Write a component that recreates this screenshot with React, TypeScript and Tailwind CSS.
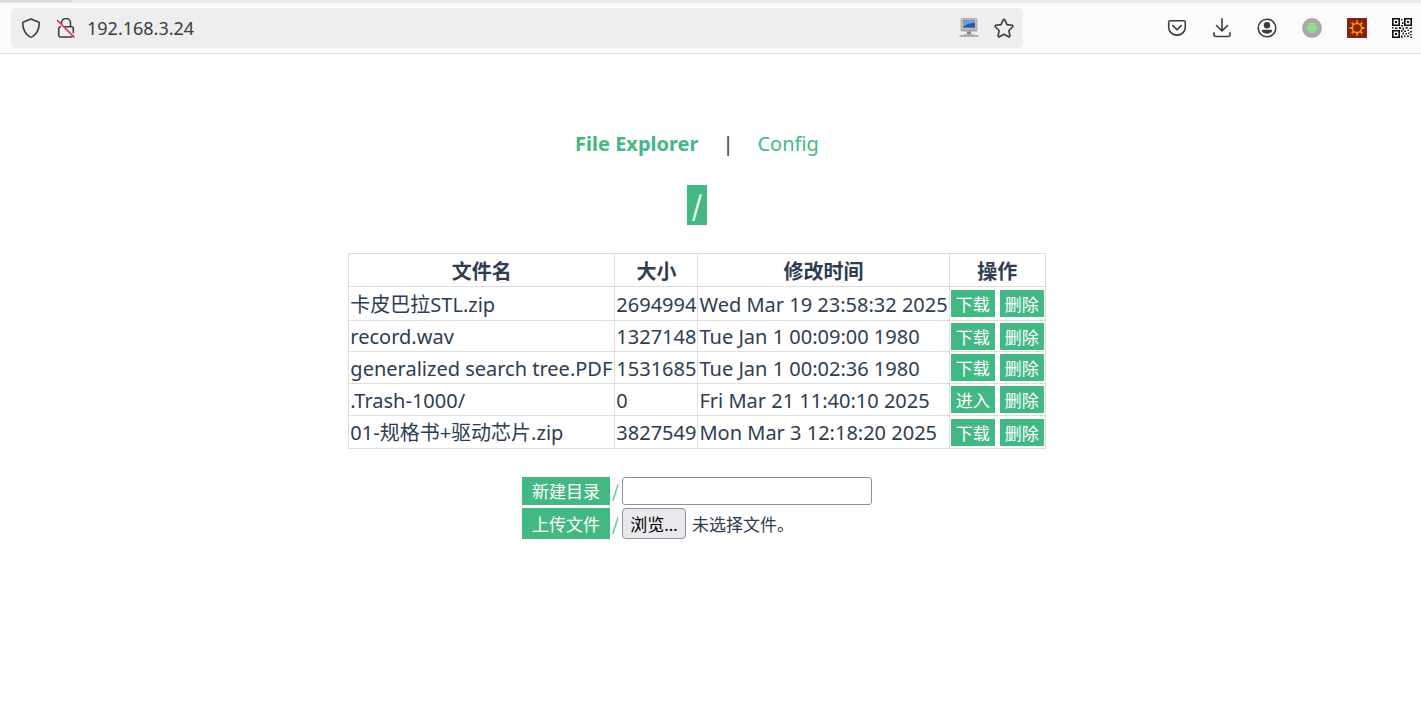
import { useState } from 'react';
import type { ReactNode } from 'react';

type Entry = { name: string; size: number; modified: string; folder?: boolean; height: string };

const entries: Entry[] = [
  { name: '卡皮巴拉STL.zip', size: 2694994, modified: 'Wed Mar 19 23:58:32 2025', height: 'h-[34px]' },
  { name: 'record.wav', size: 1327148, modified: 'Tue Jan 1 00:09:00 1980', height: 'h-[31px]' },
  { name: 'generalized search tree.PDF', size: 1531685, modified: 'Tue Jan 1 00:02:36 1980', height: 'h-[32px]' },
  { name: '.Trash-1000/', size: 0, modified: 'Fri Mar 21 11:40:10 2025', folder: true, height: 'h-[32px]' },
  { name: '01-规格书+驱动芯片.zip', size: 3827549, modified: 'Mon Mar 3 12:18:20 2025', height: 'h-[33px]' },
];

function IconButton({ label, children }: { label: string; children: ReactNode }) {
  return (
    <button type="button" aria-label={label} className="flex size-5 shrink-0 items-center justify-center">
      {children}
    </button>
  );
}

const line = { fill: 'none', stroke: '#3c3c42', strokeWidth: 1.6, strokeLinecap: 'round', strokeLinejoin: 'round' } as const;

function ShieldIcon() {
  return (
    <svg viewBox="0 0 20 20" className="size-5" {...line}>
      <path d="M10 .9 17.500 3.900c.5.2.8.5.8 1-.1 6-2.600 11-7.300 14a2 2 0 0 1-2 0C4.300 15.900 1.800 10.900 1.700 4.900c0-.5.3-.8.8-1z" />
    </svg>
  );
}

function InsecureIcon() {
  return (
    <svg viewBox="0 0 20 20" className="size-5" {...line}>
      <path d="M5.500 5a4.500 4.500 0 0 1 9 0v3.800M9 8.800h6.500a1.800 1.800 0 0 1 1.800 1.800v4M4.500 8.800A1.800 1.800 0 0 0 2.700 10.600v6.600A1.800 1.800 0 0 0 4.500 19h11.500" />
      <path d="M1.500 2.500 18 19" stroke="#e22850" />
    </svg>
  );
}

function ComputerIcon() {
  return (
    <svg viewBox="0 0 20 20" className="size-5">
      <path d="M3 .5h14a1 1 0 0 1 1 1V12H2V1.500a1 1 0 0 1 1-1z" fill="#c3bfba" stroke="#99958f" strokeWidth=".6" />
      <path d="M4 2.200h12v7.500H4z" fill="#245aa5" />
      <path d="M4 2.200h12v2.500Q8 5 4 9z" fill="#6da1dc" />
      <path d="M2 12h16v1.500H2z" fill="#aaa69f" />
      <path d="M8 13.500h4v3H8z" fill="#8b8781" />
      <path d="M5.500 16h9l1 1.500h-11z" fill="#b8b4ad" />
      <path d="M.5 18h19" stroke="#96928d" strokeWidth="1.300" />
    </svg>
  );
}

function StarIcon() {
  return (
    <svg viewBox="0 0 20 20" className="size-5" {...line}>
      <path d="M9.200 1.800a.9.9 0 0 1 1.600 0l2.200 4.800 5.200.7a.9.9 0 0 1 .5 1.500l-3.800 3.700 1 5.400a.9.900 0 0 1-1.300.9L10 16.200l-4.600 2.600a.9.900 0 0 1-1.300-.9l1-5.400-3.800-3.700a.9.900 0 0 1 .5-1.500l5.200-.7z" />
    </svg>
  );
}

function PocketIcon() {
  return (
    <svg viewBox="0 0 20 20" className="size-5" {...line}>
      <path d="M3 2.800h14A1.500 1.500 0 0 1 18.300 4.300v5a8.300 7.800 0 0 1-16.600 0v-5A1.500 1.500 0 0 1 3 2.800z" />
      <path d="m5.800 7.600 4.200 4.200 4.200-4.200" />
    </svg>
  );
}

function DownloadIcon() {
  return (
    <svg viewBox="0 0 20 20" className="size-5" {...line}>
      <path d="M10 .8v12M4.500 7.500l5.500 5.500 5.500-5.500M2 14.800v1.700a2 2 0 0 0 2 2h12a2 2 0 0 0 2-2v-1.700" />
    </svg>
  );
}

function AccountIcon() {
  return (
    <svg viewBox="0 0 20 20" className="size-5">
      <circle cx="10" cy="10" r="8.800" fill="none" stroke="#3c3c42" strokeWidth="1.600" />
      <circle cx="10" cy="7.200" r="3.200" fill="#3c3c42" />
      <path d="M5.800 11.700h8.400c.8 0 1.200.6.9 1.200-.9 1.700-2.700 2.800-5.100 2.800s-4.200-1.100-5.100-2.800c-.3-.6.1-1.200.9-1.200z" fill="#3c3c42" />
    </svg>
  );
}

function StatusIcon() {
  return (
    <svg viewBox="0 0 20 20" className="size-5">
      <circle cx="10" cy="10" r="10" fill="#aaaaaa" />
      <circle cx="10" cy="10" r="5.300" fill="#8fdb91" />
    </svg>
  );
}

function GearIcon() {
  return (
    <svg viewBox="0 0 20 20" className="size-5">
      <path d="M0 0h20v20H0z" fill="#8a220d" />
      <circle cx="10" cy="10" r="4.600" fill="none" stroke="#e8982a" strokeWidth="1.500" />
      <path d="M10 5.500V2.500M10 14.500v3M5.500 10h-3M14.500 10h3M6.500 6.500 4.700 4.700M13.500 6.500l1.800-1.800M6.500 13.500l-1.800 1.800M13.500 13.500l1.800 1.800" stroke="#e8982a" strokeWidth="1.800" />
    </svg>
  );
}

function QrIcon() {
  return (
    <svg viewBox="0 0 20 20" className="size-5">
      <path d="M.8.8h6.400v6.400H.8zM12.800.8h6.400v6.400h-6.400zM.8 12.800h6.400v6.400H.8z" fill="none" stroke="#111" strokeWidth="1.600" />
      <path d="M3 3h2v2H3zM15 3h2v2h-2zM3 15h2v2H3z" fill="#111" />
      <path
        d="M9 1h1.500v1.500H9zM10 4h1.500v2H10zM9 7h2v1.500H9zM0 9h1.500v1.500H0zM3 9.500h2.500V11H3zM7 9h2v2H7zM10.500 9.500H12V12h-1.500zM13.500 9H16v1.500h-2.500zM17.500 9.500H20V11h-2.500zM9 12h1.500v2H9zM12 12.500h2V14h-2zM15.500 11.500H17V13h-1.500zM18 13h2v1.500h-2zM10.500 14.500H12v2h-1.500zM13.500 15h1.500v1.500h-1.500zM16 14.500h1.500V16H16zM9 17.500h1.500V20H9zM12 17.500h1.500V19H12zM15 17.500h2V19h-2zM18 16h1.500v1.500H18zM18.500 18.500H20V20h-1.500z"
        fill="#222"
      />
    </svg>
  );
}

function BrowserBar() {
  return (
    <header className="border-b border-[#dedede] bg-[#fbfbfb]">
      <div className="h-[3px] bg-[#ebebed]">
        <div className="h-0.5 w-[72px] bg-[#dcdcdc]" />
      </div>
      <div className="flex h-[50px] items-center pr-[9px] pl-[11px]">
        <div className="flex h-10 min-w-0 flex-1 items-center rounded-[5px] bg-[#eeeeee] pr-[9px] pl-[10px]">
          <IconButton label="Tracking protection"><ShieldIcon /></IconButton>
          <div className="ml-[15px] flex"><IconButton label="Connection not secure"><InsecureIcon /></IconButton></div>
          <input aria-label="Address" defaultValue="192.168.3.24" className="ml-[11px] h-8 min-w-0 flex-1 bg-transparent text-lg text-[#3c3c42] outline-none" />
          <div className="flex gap-[15px]">
            <IconButton label="Site app"><ComputerIcon /></IconButton>
            <IconButton label="Bookmark"><StarIcon /></IconButton>
          </div>
        </div>
        <div className="ml-36 flex gap-[25px]">
          <IconButton label="Pocket"><PocketIcon /></IconButton>
          <IconButton label="Downloads"><DownloadIcon /></IconButton>
          <IconButton label="Account"><AccountIcon /></IconButton>
          <IconButton label="Status"><StatusIcon /></IconButton>
          <IconButton label="Settings"><GearIcon /></IconButton>
          <IconButton label="QR code"><QrIcon /></IconButton>
        </div>
      </div>
    </header>
  );
}

function ActionButton({ children }: { children: ReactNode }) {
  return (
    <button type="button" className="h-[27px] w-11 bg-[#42b983] pt-0.5 text-[17px] leading-[25px] whitespace-nowrap text-white">
      {children}
    </button>
  );
}

export default function App() {
  const [folder, setFolder] = useState('');
  const head = 'border border-[#dddddd] px-px pt-[3px] pb-0';
  const cell = 'border border-[#dddddd] px-px pt-0.5 pb-0';
  const nameCell = 'border border-[#dddddd] pt-0.5 pr-0.5 pb-0 pl-px';

  return (
    <div className="min-h-screen bg-white font-['Noto_Sans','Noto_Sans_CJK_SC',sans-serif] text-xl text-[#2c3e50]">
      <BrowserBar />
      <main className="flex flex-col items-center pt-[75px] pr-[27px]">
        <nav className="flex h-[30px] items-center gap-6 leading-[30px]">
          <a href="#files" className="font-bold text-[#42b983]">File Explorer</a>
          <span>|</span>
          <a href="#config" className="text-[#42b983]">Config</a>
        </nav>
        <h1 className="mt-[26px] flex h-10 w-5 justify-center bg-[#42b983] font-['Noto_Sans_CJK_SC',sans-serif] text-[27px] leading-10 font-medium text-white">/</h1>
        <table className="mt-7 border-collapse leading-7">
          <thead>
            <tr className="h-[33px]">
              <th className={head}>文件名</th>
              <th className={head}>大小</th>
              <th className={head}>修改时间</th>
              <th className={head}>操作</th>
            </tr>
          </thead>
          <tbody>
            {entries.map((entry) => (
              <tr key={entry.name} className={entry.height}>
                <td className={nameCell}>{entry.name}</td>
                <td className={cell}>{entry.size}</td>
                <td className={cell}>{entry.modified}</td>
                <td className="border border-[#dddddd] px-px py-0">
                  <div className="flex gap-[5px]">
                    <ActionButton>{entry.folder ? '进入' : '下载'}</ActionButton>
                    <ActionButton>删除</ActionButton>
                  </div>
                </td>
              </tr>
            ))}
          </tbody>
        </table>
        <div className="mt-7 grid w-[350px] grid-cols-1 gap-[3px] text-[17px]">
          <form className="flex h-7 items-center" onSubmit={(event) => event.preventDefault()}>
            <button type="submit" className="h-full w-[88px] bg-[#42b983] pt-0.5 text-white">新建目录</button>
            <label htmlFor="folder" className="w-3 pl-0.5 font-['Noto_Sans_CJK_SC',sans-serif] text-[#42b983]">/</label>
            <input id="folder" value={folder} onChange={(event) => setFolder(event.target.value)} className="h-full min-w-0 flex-1 rounded-[3px] border border-[#8f8f9d] bg-white px-1 outline-none" />
          </form>
          <form className="flex h-[31px] items-center" onSubmit={(event) => event.preventDefault()}>
            <button type="submit" className="h-full w-[88px] bg-[#42b983] pt-0.5 text-white">上传文件</button>
            <span className="w-3 pl-0.5 font-['Noto_Sans_CJK_SC',sans-serif] text-[#42b983]">/</span>
            <input id="upload" type="file" className="sr-only" />
            <label htmlFor="upload" className="flex h-full w-16 items-center justify-center rounded-[4px] border border-[#8f8f9d] bg-[#e9e9ed] pt-0.5 text-black">浏览…</label>
            <span className="ml-[6px] pt-0.5">未选择文件。</span>
          </form>
        </div>
      </main>
    </div>
  );
}
